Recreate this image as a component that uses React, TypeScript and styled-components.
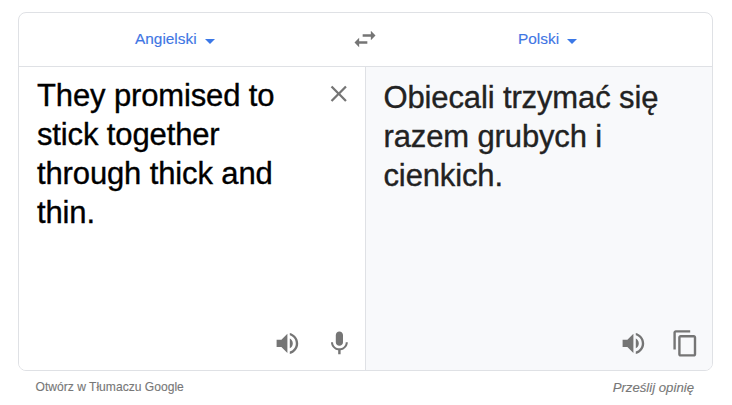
import React from "react";
import styled, { createGlobalStyle } from "styled-components";

const GlobalStyle = createGlobalStyle`
  * { box-sizing: border-box; }
  body { margin: 0; background: #fff; font-family: "Liberation Sans", Arial, sans-serif; }
`;
const Page = styled.main`
  width: 732px; height: 405px; padding: 12px 19px 0 18px; overflow: hidden;
`;
const Card = styled.section`
  width: 695px; height: 359px; border: 1px solid #dfe1e5; border-radius: 8px; overflow: hidden;
  display: flex; flex-direction: column;
`;
const LanguageBar = styled.header`
  display: grid; grid-template-columns: 314px 64px 1fr; height: 54px; flex: none;
  border-bottom: 1px solid #dfe1e5; align-items: center;
`;
const LanguageButton = styled.button<{ $shift: number }>`
  border: 0; background: none; padding: 0 0 2px ${(p) => p.$shift}px; color: #3f76e4;
  font: 15.4px "Liberation Sans", Arial, sans-serif; -webkit-text-stroke: 0.15px currentColor;
  display: flex; align-items: center; justify-content: flex-start; white-space: nowrap;
`;
const Caret = styled.span`
  border: 5.5px solid transparent; border-top-color: #3b78e7; border-bottom: 0; margin: 5px 0 0 8px;
`;
const IconButton = styled.button`
  border: 0; background: none; padding: 0; display: flex; color: #757575;
  svg { display: block; fill: currentColor; }
`;
const SwapButton = styled(IconButton)`justify-content: center; padding-bottom: 1px;`;
const Panels = styled.div`display: flex; flex: 1;`;
const Panel = styled.div<{ $output?: boolean }>`
  flex: ${(p) => (p.$output ? "1" : "0 0 347px")};
  border-right: ${(p) => (p.$output ? "0" : "1px solid #dfe1e5")};
  background: ${(p) => (p.$output ? "#f8f9fb" : "#fff")};
  color: ${(p) => (p.$output ? "#222" : "#000")};
  padding: ${(p) => (p.$output ? "11px 12px 12px 17.5px" : "9px 11.5px 12px 18px")};
  display: flex; flex-direction: column; justify-content: space-between;
`;
const TextRow = styled.div`display: flex; justify-content: space-between;`;
const Phrase = styled.p`
  margin: 0; font-size: 31px; line-height: 39px; letter-spacing: -0.13px; white-space: nowrap;
  -webkit-text-stroke: 0.35px currentColor;
`;
const ClearButton = styled(IconButton)`margin: 4px 1.5px 0 0; align-self: flex-start;`;
const Actions = styled.div`display: flex; justify-content: flex-end; align-items: center; gap: 23.2px;`;
const Footer = styled.footer`
  display: flex; justify-content: space-between; padding: 9px 19px 0 17.5px; color: #777; font-size: 12.1px; line-height: 15px;
  -webkit-text-stroke: 0.12px currentColor;
`;
const Feedback = styled.span`font-style: italic; font-size: 13.2px;`;

const Icon = ({ d, size = 28.8 }: { d: string; size?: number }) => (
  <svg width={size} height={size} viewBox="0 0 24 24"><path d={d} /></svg>
);
const SPEAKER = "M3 9v6h4l5 5V4L7 9H3zm13.5 3c0-1.77-1.02-3.29-2.5-4.03v8.05c1.48-.73 2.5-2.25 2.5-4.02zM14 3.23v2.06c2.89.86 5 3.54 5 6.71s-2.11 5.85-5 6.71v2.06c4.01-.91 7-4.49 7-8.77s-2.99-7.86-7-8.77z";
const MIC = "M12 14c1.66 0 2.99-1.34 2.99-3L15 5c0-1.66-1.34-3-3-3S9 3.34 9 5v6c0 1.66 1.34 3 3 3zm5.3-3c0 3-2.54 5.1-5.3 5.1S6.7 14 6.7 11H5c0 3.41 2.72 6.23 6 6.72V21h2v-3.28c3.28-.48 6-3.3 6-6.72h-1.7z";
const COPY = "M16 1H4c-1.1 0-2 .9-2 2v14h2V3h12V1zm3 4H8c-1.1 0-2 .9-2 2v14c0 1.1.9 2 2 2h11c1.1 0 2-.9 2-2V7c0-1.1-.9-2-2-2zm0 16H8V7h11v14z";
const CLOSE = "M19 6.41L17.59 5 12 10.59 6.41 5 5 6.41 10.59 12 5 17.59 6.41 19 12 13.41 17.59 19 19 17.59 13.41 12z";
const SWAP = "M6.99 11L3 15l3.99 4v-3H14v-2H6.99v-3zM21 9l-3.99-4v3H10v2h7.01v3L21 9z";

export default function App() {
  return (
    <Page>
      <GlobalStyle />
      <Card>
        <LanguageBar>
          <LanguageButton $shift={116}>Angielski<Caret /></LanguageButton>
          <SwapButton aria-label="Swap"><Icon d={SWAP} size={28} /></SwapButton>
          <LanguageButton $shift={121}>Polski<Caret /></LanguageButton>
        </LanguageBar>
        <Panels>
          <Panel>
            <TextRow>
              <Phrase>They promised to<br />stick together<br />through thick and<br />thin.</Phrase>
              <ClearButton aria-label="Clear"><Icon d={CLOSE} size={27.5} /></ClearButton>
            </TextRow>
            <Actions>
              <IconButton aria-label="Listen"><Icon d={SPEAKER} /></IconButton>
              <IconButton aria-label="Speak"><Icon d={MIC} /></IconButton>
            </Actions>
          </Panel>
          <Panel $output>
            <Phrase>Obiecali trzymać się<br />razem grubych i<br />cienkich.</Phrase>
            <Actions>
              <IconButton aria-label="Listen"><Icon d={SPEAKER} /></IconButton>
              <IconButton aria-label="Copy"><Icon d={COPY} /></IconButton>
            </Actions>
          </Panel>
        </Panels>
      </Card>
      <Footer><span>Otwórz w Tłumaczu Google</span><Feedback>Prześlij opinię</Feedback></Footer>
    </Page>
  );
}
